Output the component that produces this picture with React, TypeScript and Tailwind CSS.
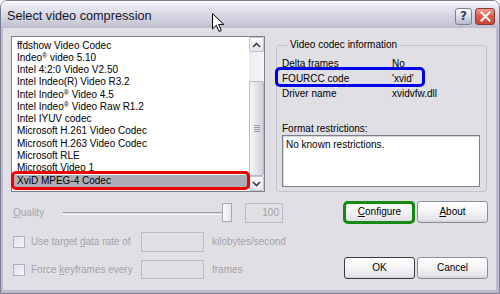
import React from "react";

const items: React.ReactNode[] = [
  "ffdshow Video Codec",
  <>Indeo<span className="text-[7px] relative top-[-3px]">®</span> video 5.10</>,
  "Intel 4:2:0 Video V2.50",
  "Intel Indeo(R) Video R3.2",
  <>Intel Indeo<span className="text-[7px] relative top-[-3px]">®</span> Video 4.5</>,
  <>Intel Indeo<span className="text-[7px] relative top-[-3px]">®</span> Video Raw R1.2</>,
  "Intel IYUV codec",
  "Microsoft H.261 Video Codec",
  "Microsoft H.263 Video Codec",
  "Microsoft RLE",
  "Microsoft Video 1",
  "XviD MPEG-4 Codec",
];

function Btn({ children, def }: { children: React.ReactNode; def?: boolean }) {
  return (
    <div
      className={`w-[71px] h-[22px] flex items-center justify-center rounded-[3px] border ${
        def ? "border-[#3a3a48]" : "border-[#8e8e9c]"
      } bg-[linear-gradient(to_bottom,#ffffff_0%,#f4f4f6_50%,#e4e3e9_90%,#cfcfd8_100%)] text-black`}
    >
      {children}
    </div>
  );
}

function Check() {
  return (
    <div className="w-[12px] h-[12px] border border-[#b2b1ba] bg-[linear-gradient(to_bottom_right,#e2e1e6,#f6f6f8)]" />
  );
}

function Arrow({ up }: { up?: boolean }) {
  return (
    <svg width="9" height="6" viewBox="0 0 9 6">
      <path
        d={up ? "M1 5 L4.5 1.5 L8 5" : "M1 1 L4.5 4.5 L8 1"}
        fill="none"
        stroke="#3a3a4a"
        strokeWidth="1.6"
      />
    </svg>
  );
}

export default function App() {
  return (
    <div className="relative w-[500px] h-[294px] bg-white overflow-hidden font-['Liberation_Sans',Arial,sans-serif] text-[10px] leading-[12px] text-black">
      <div className="flex flex-col h-full rounded-t-[7px] border border-[#7d7c93] overflow-hidden">
        {/* Title bar */}
        <div className="h-[27px] shrink-0 flex items-center pl-[6px] pr-[4px] pt-[3px] bg-[linear-gradient(to_bottom,#fdfdfe_0%,#ececf3_15%,#d9d9e6_50%,#cacad9_80%,#bdbdcf_100%)]">
          <span className="text-[12.7px] leading-[15px] text-[#16162a]">Select video compression</span>
          <div className="ml-auto flex gap-[3px]">
            <div className="w-[17px] h-[17px] rounded-[3px] border border-[#7f7f98] bg-[linear-gradient(to_bottom,#fbfbfd,#d4d4e2_60%,#b9b9cc)] flex items-center justify-center text-[12px] font-bold text-[#3c3c5a] font-['DejaVu_Sans',sans-serif]">
              ?
            </div>
            <div className="w-[20px] h-[17px] rounded-[3px] border border-[#8a3a34] bg-[linear-gradient(to_bottom,#f0a090,#d9604e_45%,#c84434)] flex items-center justify-center">
              <svg width="11" height="11" viewBox="0 0 11 11">
                <path d="M1.5 1.5 L9.5 9.5 M9.5 1.5 L1.5 9.5" stroke="#fff" strokeWidth="2" strokeLinecap="square" />
              </svg>
            </div>
          </div>
        </div>

        {/* Body */}
        <div className="flex-1 bg-[#e0dfe3] border-l-[2px] border-r-[3px] border-b-[3px] border-[#bcbbcd] px-[8px] pt-[8px] flex flex-col">
          {/* top row */}
          <div className="flex h-[156px]">
            <div className="w-[254px] h-[156px] border border-[#7f7f8a] bg-white flex">
              <div className="flex-1 pt-[2.6px] pl-[2px] pr-[1px]">
                {items.map((t, i) => (
                  <div
                    key={i}
                    className={`h-[12.27px] leading-[12.27px] pl-[3px] whitespace-nowrap ${
                      i === items.length - 1 ? "bg-[#adadb6]" : ""
                    }`}
                  >
                    {t}
                  </div>
                ))}
              </div>
              <div className="w-[15px] flex flex-col bg-[#f3f3f6]">
                <div className="h-[15px] rounded-[2px] border border-[#c3c3d1] bg-[linear-gradient(to_bottom,#fefefe,#e3e3ec)] flex items-center justify-center">
                  <Arrow up />
                </div>
                <div className="flex-1 flex flex-col justify-end bg-[linear-gradient(to_right,#ececf1,#f8f8fa)]">
                  <div className="h-[95px] rounded-[2px] border border-[#b9b9c9] bg-[linear-gradient(to_right,#f6f6f9,#e0e0e8_60%,#d0d0dc)] flex items-center justify-center">
                    <div className="flex flex-col gap-[1px]">
                      <div className="w-[6px] h-[1px] bg-[#9a9aaa]" />
                      <div className="w-[6px] h-[1px] bg-[#9a9aaa]" />
                      <div className="w-[6px] h-[1px] bg-[#9a9aaa]" />
                      <div className="w-[6px] h-[1px] bg-[#9a9aaa]" />
                    </div>
                  </div>
                </div>
                <div className="h-[15px] rounded-[2px] border border-[#c3c3d1] bg-[linear-gradient(to_bottom,#fefefe,#e3e3ec)] flex items-center justify-center">
                  <Arrow />
                </div>
              </div>
            </div>

            <fieldset className="ml-[11px] mt-[3px] w-[211px] h-[153px] border border-[#c4c3cc] rounded-[3px] px-[5px]">
              <legend className="ml-[6px] px-[2px] leading-[12px]">Video codec information</legend>
              <div className="mt-[5px]">
                <div className="flex h-[15px] items-center">
                  <div className="w-[110px]">Delta frames</div>
                  <div>No</div>
                </div>
                <div className="flex h-[15px] items-center">
                  <div className="w-[110px]">FOURCC code</div>
                  <div>'xvid'</div>
                </div>
                <div className="flex h-[15px] items-center">
                  <div className="w-[110px]">Driver name</div>
                  <div>xvidvfw.dll</div>
                </div>
              </div>
              <div className="mt-[22px] h-[12px]">Format restrictions:</div>
              <div className="w-[198px] h-[52px] border border-[#7f7f8a] shadow-[inset_1px_1px_0_#d6d6dc] bg-white pl-[3px] pt-[3px]">
                No known restrictions.
              </div>
            </fieldset>
          </div>

          {/* bottom section */}
          <div className="flex mt-[9px]">
            <div className="flex flex-col pt-[2px] text-[#a3a3aa]">
              <div className="flex items-center h-[20px]">
                <div className="w-[52px] pl-[2px]">
                  <u>Q</u>uality
                </div>
                <div className="relative w-[170px] h-[20px] flex items-center">
                  <div className="w-[167px] h-[3px] border-t border-[#a0a0a8] border-b border-b-white bg-[#d8d8dc]" />
                  <div className="absolute left-[159px] top-[0px] w-[10px] h-[19px] border border-[#a8a8b2] bg-[linear-gradient(to_right,#fbfbfc,#e6e6ea)]" />
                </div>
                <div className="ml-[12px] w-[38px] h-[20px] border border-[#bdbcc6] flex items-center justify-end pr-[3px]">
                  100
                </div>
              </div>
              <div className="flex items-center h-[20px] mt-[9px]">
                <div className="w-[130px] flex items-center pl-[2px] gap-[6px]">
                  <Check />
                  <span>
                    Use target <u>d</u>ata rate of
                  </span>
                </div>
                <div className="w-[63px] h-[20px] border border-[#bdbcc6]" />
                <div className="ml-[8px]">kilobytes/second</div>
              </div>
              <div className="flex items-center h-[19px] mt-[8px]">
                <div className="w-[130px] flex items-center pl-[2px] gap-[6px]">
                  <Check />
                  <span>
                    Force <u>k</u>eyframes every
                  </span>
                </div>
                <div className="w-[63px] h-[19px] border border-[#bdbcc6]" />
                <div className="ml-[8px]">frames</div>
              </div>
            </div>

            <div className="ml-auto w-[144px] flex flex-col">
              <div className="flex gap-[2px]">
                <Btn>
                  <span>
                    <u>C</u>onfigure
                  </span>
                </Btn>
                <Btn>
                  <span>
                    <u>A</u>bout
                  </span>
                </Btn>
              </div>
              <div className="flex gap-[2px] mt-[34px]">
                <Btn def>OK</Btn>
                <Btn>Cancel</Btn>
              </div>
            </div>
          </div>
        </div>
      </div>

      {/* annotations */}
      <div className="absolute left-[11px] top-[171px] w-[239px] h-[19px] border-[3px] border-[#ee0000] rounded-[5px]" />
      <div className="absolute left-[275px] top-[67px] w-[150px] h-[20px] border-[3px] border-[#0000e6] rounded-[5px]" />
      <div className="absolute left-[343px] top-[201px] w-[72px] h-[23px] border-[3px] border-[#168a16] rounded-[5px]" />

      {/* cursor */}
      <svg className="absolute left-[212px] top-[13px]" width="13" height="20" viewBox="0 0 13 20">
        <path d="M0.5 0.5 L0.5 16 L4.3 12.3 L7 18.5 L9.3 17.5 L6.7 11.4 L11.8 11.4 Z" fill="#fff" stroke="#000" strokeWidth="1" strokeLinejoin="round" />
      </svg>
    </div>
  );
}
